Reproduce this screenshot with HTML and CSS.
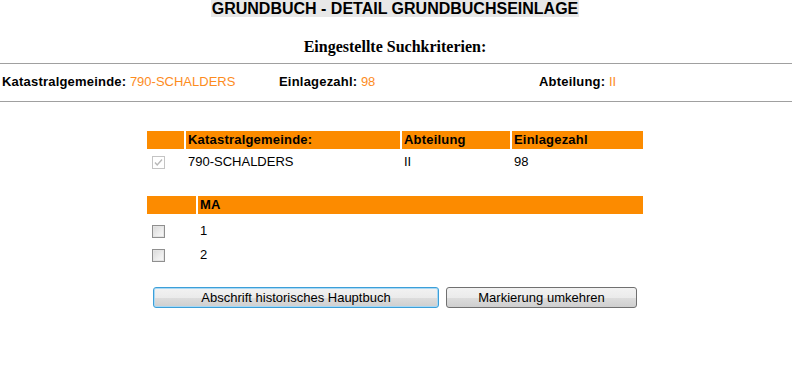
FILE: index.html
```html
<!DOCTYPE html>
<html lang="de">
<head>
<meta charset="utf-8">
<title>Grundbuch - Detail Grundbuchseinlage</title>
<link rel="stylesheet" href="styles.css">
</head>
<body>
<div class="page">
  <div class="title-wrap"><h1 class="title">GRUNDBUCH - DETAIL GRUNDBUCHSEINLAGE</h1></div>
  <h2 class="subtitle">Eingestellte Suchkriterien:</h2>
  <div class="criteria">
    <div class="crit"><span class="lbl">Katastralgemeinde:</span> <span class="val">790-SCHALDERS</span></div>
    <div class="crit"><span class="lbl">Einlagezahl:</span> <span class="val">98</span></div>
    <div class="crit"><span class="lbl">Abteilung:</span> <span class="val">II</span></div>
  </div>

  <div class="grid grid-kg">
    <div class="th"></div>
    <div class="th">Katastralgemeinde:</div>
    <div class="th">Abteilung</div>
    <div class="th">Einlagezahl</div>
    <div class="td td-cb"><span class="cb cb-checked-disabled"><svg viewBox="0 0 13 13" width="13" height="13"><path d="M3 6.5 L5.2 9 L10 3.5" fill="none" stroke="#b8b8b8" stroke-width="1.4"/></svg></span></div>
    <div class="td">790-SCHALDERS</div>
    <div class="td">II</div>
    <div class="td">98</div>
  </div>

  <div class="grid grid-ma">
    <div class="th"></div>
    <div class="th">MA</div>
    <div class="td td-cb row"><span class="cb"></span></div>
    <div class="td row">1</div>
    <div class="td td-cb row2"><span class="cb"></span></div>
    <div class="td row2">2</div>
  </div>

  <div class="buttons">
    <button class="btn btn-focus" type="button">Abschrift historisches Hauptbuch</button>
    <button class="btn btn-2" type="button">Markierung umkehren</button>
  </div>
</div>
</body>
</html>
```
FILE: styles.css
```css
html, body {
  margin: 0;
  padding: 0;
  background: #fff;
}
body {
  font-family: "Liberation Sans", Arial, sans-serif;
  font-size: 13px;
  color: #000;
}
.page {
  width: 790px;
}
.title-wrap {
  text-align: center;
  height: 17px;
}
.title {
  display: inline-block;
  margin: 0;
  font-size: 16px;
  font-weight: bold;
  line-height: 17px;
  background: #e8e8e8;
  color: #000;
  padding: 0 1px;
}
.subtitle {
  margin: 0;
  padding-top: 21px;
  height: 25px;
  text-align: center;
  font-family: "Liberation Serif", "Times New Roman", serif;
  font-size: 16px;
  font-weight: bold;
  line-height: 18px;
}
.criteria {
  width: 792px;
  border-top: 1px solid #a0a0a0;
  border-bottom: 1px solid #a0a0a0;
  display: grid;
  grid-template-columns: 277px 260px 1fr;
  padding: 0 0 0 2px;
  box-sizing: border-box;
  height: 39px;
  align-items: center;
}
.crit {
  line-height: 16px;
  padding-bottom: 1px;
}
.lbl {
  font-weight: bold;
  letter-spacing: 0.2px;
}
.val {
  color: #fd8c1e;
}
.grid {
  display: grid;
  column-gap: 2px;
  row-gap: 2px;
  margin-left: 147px;
  width: 496px;
}
.grid-kg {
  margin-top: 29px;
  grid-template-columns: 37px 214px 108px 131px;
}
.grid-ma {
  margin-top: 23px;
  grid-template-columns: 49px 445px;
}
.th {
  background: #fc8b00;
  height: 18px;
  line-height: 18px;
  font-weight: bold;
  letter-spacing: 0.2px;
  padding-left: 2px;
  color: #000;
}
.td {
  height: 22px;
  line-height: 22px;
  padding-left: 2px;
  display: flex;
  align-items: center;
}
.grid-ma .row {
  margin-top: 4px;
}
.grid-ma .row,
.grid-ma .row2 {
  height: 22px;
}
.td-cb {
  padding-left: 5px;
}
.cb {
  display: inline-block;
  width: 13px;
  height: 13px;
  box-sizing: border-box;
  border: 1px solid #8f8f8f;
  background: linear-gradient(135deg, #d8d8d8 0%, #eeeeee 60%, #fafafa 100%);
  box-shadow: inset 0 0 0 1px #e4e4e4;
}
.cb-checked-disabled {
  border-color: #c4c4c4;
  background: #fff;
  box-shadow: none;
  position: relative;
}
.cb-checked-disabled svg {
  position: absolute;
  left: -1px;
  top: -1px;
}
.buttons {
  display: flex;
  justify-content: center;
  gap: 7px;
  margin-top: 21px;
}
.btn {
  height: 21px;
  box-sizing: border-box;
  font-family: "Liberation Sans", Arial, sans-serif;
  font-size: 13px;
  color: #000;
  border: 1px solid #707070;
  border-radius: 3px;
  background: linear-gradient(to bottom, #f2f2f2 0%, #ebebeb 50%, #dddddd 51%, #cfcfcf 100%);
  padding: 0;
  line-height: 18px;
  margin: 0;
}
.btn-focus {
  width: 286px;
  border-color: #3c9fd8;
  box-shadow: inset 0 0 0 1px #a7d8f5;
}
.btn-2 {
  width: 191px;
}
```
